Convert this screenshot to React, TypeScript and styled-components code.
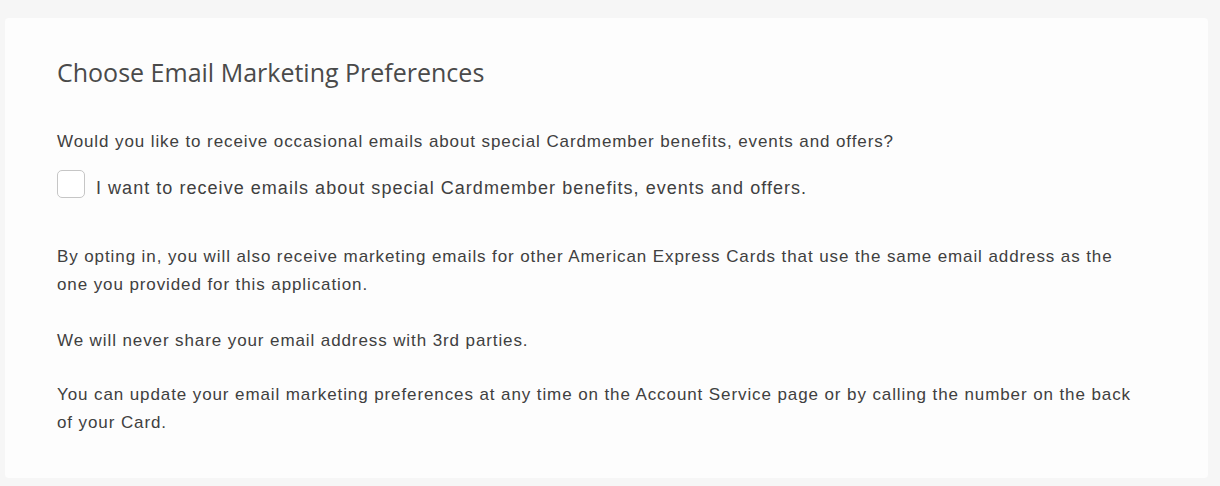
import React from "react";
import styled, { createGlobalStyle } from "styled-components";

const Global = createGlobalStyle`
  html, body { margin: 0; padding: 0; background: #f6f6f6; }
  body { font-family: "Liberation Sans", Arial, sans-serif; }
`;

const Page = styled.div`
  padding: 18px 12px 8px 5px;
  box-sizing: border-box;
  height: 486px;
`;

const Card = styled.section`
  background: #fdfdfd;
  border-radius: 4px;
  height: 460px;
  box-sizing: border-box;
  padding: 39px 62px 0 52px;
  color: #3c3c3c;
`;

const Title = styled.h2`
  margin: 0 0 41px 0;
  font-family: "Open Sans", "Liberation Sans", sans-serif;
  font-weight: 400;
  font-size: 25px;
  line-height: 30px;
  color: #4a4a4a;
`;

const Text = styled.p<{ $gap?: number }>`
  margin: 0 0 ${(p) => p.$gap ?? 0}px 0;
  font-size: 17px;
  letter-spacing: 0.9px;
  line-height: 28px;
  color: #404040;
`;

const CheckRow = styled.label`
  display: flex;
  align-items: flex-start;
  gap: 11px;
  margin: 14px 0 41px 0;
`;

const LabelText = styled.span`
  font-size: 18px;
  letter-spacing: 1.04px;
  line-height: 28px;
  margin-top: 4px;
  color: #404040;
`;

const Box = styled.span`
  width: 26px;
  height: 26px;
  border: 1.5px solid #c6c6c6;
  border-radius: 5px;
  background: #fff;
  flex: none;
`;

export default function App() {
  return (
    <Page>
      <Global />
      <Card>
        <Title>Choose Email Marketing Preferences</Title>
        <Text>Would you like to receive occasional emails about special Cardmember benefits, events and offers?</Text>
        <CheckRow>
          <Box />
          <LabelText>I want to receive emails about special Cardmember benefits, events and offers.</LabelText>
        </CheckRow>
        <Text $gap={28}>
          By opting in, you will also receive marketing emails for other American Express Cards that use the same email address as the one you provided for this application.
        </Text>
        <Text $gap={26}>We will never share your email address with 3rd parties.</Text>
        <Text>
          You can update your email marketing preferences at any time on the Account Service page or by calling the number on the back of your Card.
        </Text>
      </Card>
    </Page>
  );
}
